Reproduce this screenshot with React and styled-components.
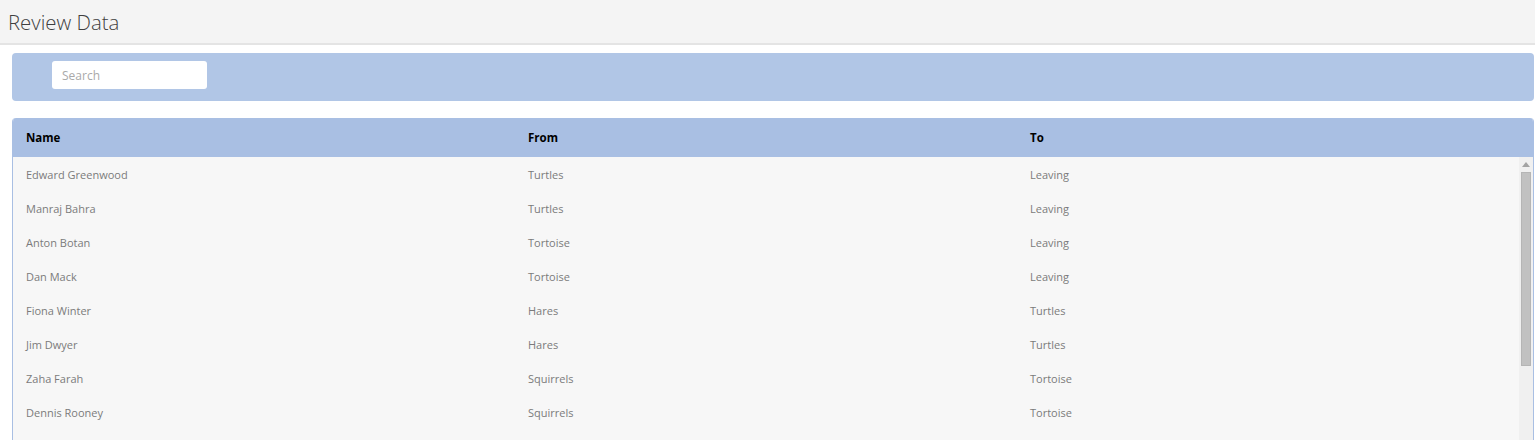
import React from 'react';
import styled, { createGlobalStyle } from 'styled-components';

const Global = createGlobalStyle`
    html, body {
        margin: 0;
        padding: 0;
        background: #ffffff;
        font-family: "Open Sans", "Liberation Sans", sans-serif;
        overflow: hidden;
    }
    * { box-sizing: border-box; }
`;

const Page = styled.div`
    height: 440px;
    display: flex;
    flex-direction: column;
`;

const TopBar = styled.div`
    height: 45px;
    flex: none;
    background-color: #f4f4f4;
    border-bottom: 2px solid #e4e4e4;
    padding: 8px 8px 0;
`;

const Title = styled.h1`
    margin: 0;
    font-size: 20.4px;
    font-weight: 300;
    color: #3f3f3f;
    line-height: 29px;
`;

const SearchPanel = styled.div`
    flex: none;
    margin: 8px 1px 0 12px;
    height: 48px;
    background-color: #b1c6e6;
    border-radius: 4px;
    padding: 8px 40px;
`;

const SearchInput = styled.input`
    width: 155px;
    height: 28px;
    border: none;
    border-radius: 3px;
    background: #ffffff;
    padding: 0 10px;
    font-family: inherit;
    font-size: 12px;
    color: #555;
    outline: none;
    &::placeholder { color: #a9a9a9; }
`;

const Table = styled.div`
    flex: 1;
    min-height: 0;
    margin: 17px 1px 0 12px;
    display: flex;
    flex-direction: column;
    border-left: 1px solid #a9bfe3;
    border-right: 1px solid #a9bfe3;
    border-radius: 4px 4px 0 0;
    overflow: hidden;
`;

const HeadRow = styled.div`
    flex: none;
    height: 39px;
    background-color: #a9bfe3;
    display: grid;
    grid-template-columns: repeat(3, 1fr) 14px;
    align-items: center;
`;

const HeadCell = styled.div`
    padding-left: 13px;
    font-size: 11.5px;
    font-weight: 700;
    color: #000;
`;

const Body = styled.div`
    flex: 1;
    min-height: 0;
    display: flex;
    background-color: #f7f7f7;
`;

const Rows = styled.div`
    flex: 1;
    min-width: 0;
    overflow: hidden;
`;

const Row = styled.div`
    height: 34px;
    display: grid;
    grid-template-columns: repeat(3, 1fr);
    align-items: center;
`;

const Cell = styled.div`
    padding-left: 13px;
    font-size: 11px;
    color: #7b7b7b;
`;

const ScrollTrack = styled.div`
    flex: none;
    width: 14px;
    background: #f0f0f0;
    display: flex;
    flex-direction: column;
    align-items: center;
`;

const ScrollButton = styled.div`
    flex: none;
    height: 15px;
    width: 100%;
    display: flex;
    align-items: center;
    justify-content: center;
`;

const ScrollThumb = styled.div`
    flex: none;
    width: 10px;
    height: 194px;
    background: #c1c1c1;
    border: 1px solid #b5b5b5;
`;

const rows = [
    ['Edward Greenwood', 'Turtles', 'Leaving'],
    ['Manraj Bahra', 'Turtles', 'Leaving'],
    ['Anton Botan', 'Tortoise', 'Leaving'],
    ['Dan Mack', 'Tortoise', 'Leaving'],
    ['Fiona Winter', 'Hares', 'Turtles'],
    ['Jim Dwyer', 'Hares', 'Turtles'],
    ['Zaha Farah', 'Squirrels', 'Tortoise'],
    ['Dennis Rooney', 'Squirrels', 'Tortoise'],
];

function App() {
    return (
        <>
            <Global />
            <Page>
                <TopBar>
                    <Title>Review Data</Title>
                </TopBar>
                <SearchPanel>
                    <SearchInput placeholder="Search" />
                </SearchPanel>
                <Table>
                    <HeadRow>
                        <HeadCell>Name</HeadCell>
                        <HeadCell>From</HeadCell>
                        <HeadCell>To</HeadCell>
                    </HeadRow>
                    <Body>
                        <Rows>
                            {rows.map((r, i) => (
                                <Row key={i}>
                                    <Cell>{r[0]}</Cell>
                                    <Cell>{r[1]}</Cell>
                                    <Cell>{r[2]}</Cell>
                                </Row>
                            ))}
                        </Rows>
                        <ScrollTrack>
                            <ScrollButton>
                                <svg width="8" height="5" viewBox="0 0 8 5">
                                    <path d="M0 5 L4 0 L8 5 Z" fill="#a3a3a3" />
                                </svg>
                            </ScrollButton>
                            <ScrollThumb />
                        </ScrollTrack>
                    </Body>
                </Table>
            </Page>
        </>
    );
}

export default App;
